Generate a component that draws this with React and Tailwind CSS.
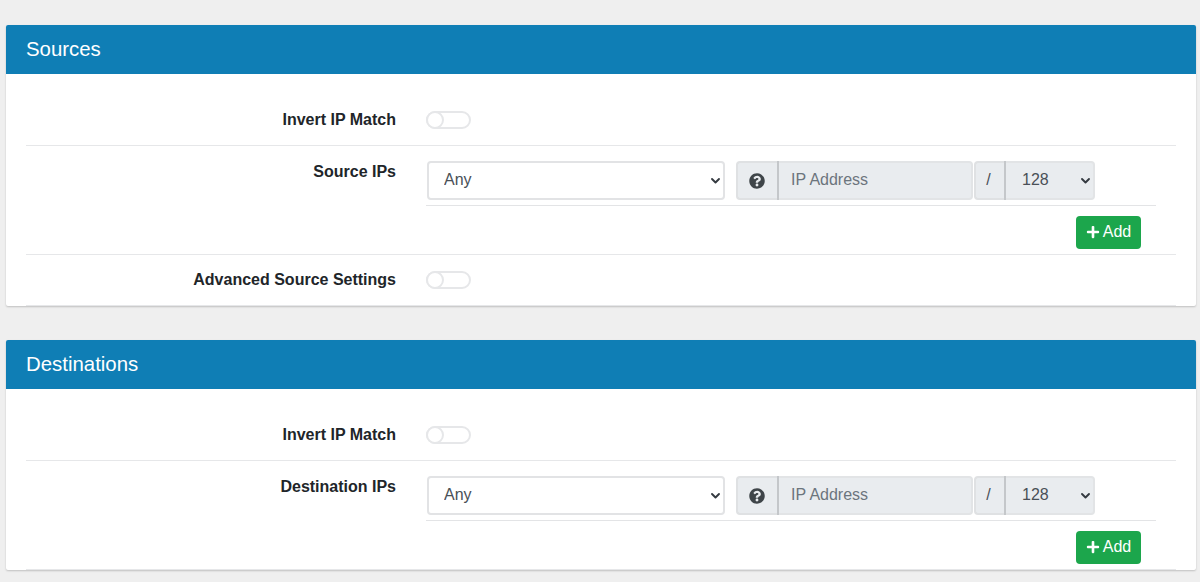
import React from "react";
import { FaQuestionCircle, FaPlus } from "react-icons/fa";

const Chevron = () => (
  <svg className="pointer-events-none absolute right-[4px] top-1/2 -translate-y-1/2" width="11" height="8" viewBox="0 0 11 8" fill="none">
    <path d="M2 2 5.5 5.5 9 2" stroke="#343a40" strokeWidth="1.9" strokeLinecap="round" strokeLinejoin="round" />
  </svg>
);

const Toggle = () => (
  <div className="flex h-[18px] w-[45px] items-center rounded-full border-2 border-[#e6e7e9] bg-white">
    <div className="-ml-[2px] h-[18px] w-[18px] rounded-full border-2 border-[#e6e7e9] bg-white" />
  </div>
);

const Row = ({ label, children, className = "", labelClass = "" }) => (
  <div className={`flex border-b border-[#e6e7e9] ${className}`}>
    <div className={`w-[370px] shrink-0 text-right text-[16px] font-bold leading-[20px] text-[#212529] ${labelClass}`}>{label}</div>
    <div className="ml-[30px] min-w-0 flex-1">{children}</div>
  </div>
);

const Ips = () => (
  <div>
    <div className="w-[730px] border-b border-[#e3e4e6] pb-[5px]">
      <div className="flex h-[39px] items-stretch">
        <div className="relative ml-px w-[298px]">
          <select className="h-full w-full appearance-none rounded-[4px] border-2 border-[#e2e3e5] bg-white pb-[2px] pl-[15px] text-[16px] leading-[24px] text-[#495057] outline-none">
            <option>Any</option>
          </select>
          <Chevron />
        </div>
        <div className="ml-[11px] flex w-[41px] items-center justify-center rounded-l-[4px] border-2 border-r-0 border-[#dfe1e3] bg-[#e9ecef] pr-[2px]">
          <FaQuestionCircle className="text-[#3f4549]" size={16} />
        </div>
        <div className="w-[2px] bg-[#c4c7ca]" />
        <input
          disabled
          placeholder="IP Address"
          className="w-[194px] rounded-r-[4px] border-2 border-l-0 border-[#e2e4e6] bg-[#e9ecef] pb-[2px] pl-[12px] text-[16px] text-[#6c757d] outline-none placeholder:text-[#6c757d] placeholder:opacity-100"
        />
        <div className="ml-px flex w-[30px] items-center justify-center rounded-l-[4px] border-2 border-r-0 border-[#dfe1e3] bg-[#e9ecef] pb-[2px] pr-[3px] text-[16px] text-[#495057]">/</div>
        <div className="w-[2px] bg-[#c4c7ca]" />
        <div className="relative w-[89px]">
          <select disabled className="h-full w-full appearance-none rounded-r-[4px] border-2 border-l-0 border-[#e2e4e6] bg-[#e9ecef] pb-[2px] pl-[16px] text-[16px] text-[#495057] opacity-100 outline-none">
            <option>128</option>
          </select>
          <Chevron />
        </div>
      </div>
    </div>
    <div className="mr-[35px] mt-[10px] flex justify-end">
      <button className="flex h-[33px] w-[65px] items-center justify-center gap-[3px] rounded-[4px] bg-[#1ca64c] pb-[2px] text-[16px] text-white">
        <FaPlus size={14} />
        <span>Add</span>
      </button>
    </div>
  </div>
);

const Card = ({ title, ipLabel, advanced }) => (
  <section className="mb-[34px] rounded-[2px] bg-white shadow-[0_1px_2px_rgba(0,0,0,0.2)]">
    <h2 className="flex h-[49px] items-center rounded-t-[2px] bg-[#0f7eb5] pl-[20px] text-[20.4px] font-normal text-white">{title}</h2>
    <div className="px-[20px]">
      <Row label="Invert IP Match" className="h-[72px] pt-[36px]">
        <div className="pt-px">
          <Toggle />
        </div>
      </Row>
      <Row label={ipLabel} labelClass="pt-px" className="h-[109px] pt-[15px]">
        <Ips />
      </Row>
      {advanced && (
        <Row label="Advanced Source Settings" className="h-[51px] items-center">
          <Toggle />
        </Row>
      )}
    </div>
  </section>
);

export default function App() {
  return (
    <div className="h-[582px] overflow-hidden bg-[#efefef] pl-[6px] pr-[4px] pt-[25px] font-['Liberation_Sans',Arial,sans-serif]">
      <Card title="Sources" ipLabel="Source IPs" advanced />
      <Card title="Destinations" ipLabel="Destination IPs" />
    </div>
  );
}
